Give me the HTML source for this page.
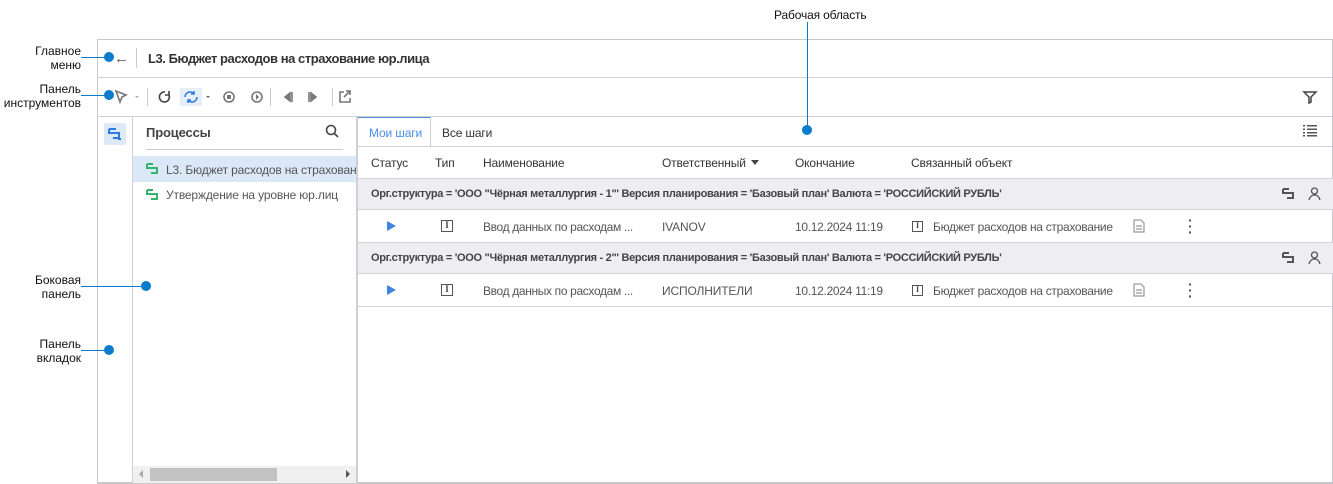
<!DOCTYPE html>
<html><head><meta charset="utf-8"><style>
*{box-sizing:border-box;margin:0;padding:0}
body{width:1333px;height:484px;background:#fff;font-family:"Liberation Sans",Arial,sans-serif;position:relative;overflow:hidden;color:#333}
.a{position:absolute}
.t{font-size:12px;white-space:nowrap;letter-spacing:-0.15px}
.lbl{font-size:12px;color:#111;text-align:right;line-height:14px}
.dot{width:10px;height:10px;border-radius:50%;background:#0a7ccc}
.ln{height:1px;background:#0a7ccc}
.g{color:#555}
.grp{font-size:11px;font-weight:bold;color:#444;letter-spacing:-0.3px}
</style></head><body>
<!-- frame -->
<div class="a" style="left:97px;top:39px;width:1236px;height:445px;border:1px solid #c8c8cc;border-bottom:2px solid #c8c8cc"></div>
<div class="a" style="left:97px;top:77px;width:1236px;height:1px;background:#d0d0d4"></div>
<div class="a" style="left:97px;top:116px;width:1236px;height:1px;background:#d0d0d4"></div>
<div class="a" style="left:132px;top:117px;width:1px;height:366px;background:#d0d0d4"></div>
<div class="a" style="left:356px;top:117px;width:2px;height:366px;background:#d0d0d4"></div>
<!-- header -->
<div class="a t" style="left:114px;top:50px;font-size:15px;color:#555">&#8592;</div>
<div class="a" style="left:136px;top:48px;width:1px;height:20px;background:#ccc"></div>
<div class="a t" style="left:148px;top:51px;font-size:13px;font-weight:bold;color:#333;letter-spacing:-0.45px">L3. Бюджет расходов на страхование юр.лица</div>
<!-- toolbar -->
<svg class="a" style="left:112px;top:88px" width="240" height="18" viewBox="0 0 240 18" fill="none" stroke="#777" stroke-width="1.6">
<path d="M4 3l10 4-4 2-2 5z" fill="none"/>
<path d="M23 8l2 2 2-2" fill="#aaa" stroke="none"/>
<path d="M53 4a5 5 0 1 0 4 3M57 3v4h-4" stroke="#444"/>
<rect x="68" y="0" width="22" height="18" fill="#e6eefa" stroke="none"/>
<path d="M73 9a5 5 0 0 1 9-3M85 9a5 5 0 0 1-9 3M82 3v3h-3M76 15v-3h3" stroke="#2d7be0"/>
<path d="M94 8l2 2 2-2" fill="#666" stroke="none"/>
<circle cx="117" cy="9" r="5"/><rect x="115" y="7" width="4" height="4" fill="#777" stroke="none"/>
<circle cx="145" cy="9" r="5"/><path d="M144 6l3 3-3 3z" fill="#777" stroke="none"/>
<path d="M180 4v10M178 5l-5 4 5 4z" fill="#777"/>
<path d="M197 4v10M199 5l5 4-5 4z" fill="#777"/>
<path d="M232 4h-4v10h10v-4M234 3h4v4M238 3l-6 6"/>
</svg>
<div class="a" style="left:147px;top:88px;width:1px;height:18px;background:#ccc"></div>
<div class="a" style="left:270px;top:88px;width:1px;height:18px;background:#ccc"></div>
<div class="a" style="left:332px;top:88px;width:1px;height:18px;background:#ccc"></div>
<svg class="a" style="left:1302px;top:89px" width="16" height="16" fill="none" stroke="#444" stroke-width="1.5"><path d="M2 3h12l-5 5v5l-2 1v-6z"/></svg>
<!-- left rail -->
<div class="a" style="left:104px;top:123px;width:22px;height:22px;background:#dde8f8;border-radius:2px"></div>
<svg class="a" style="left:108px;top:127px" width="14" height="14" fill="none" stroke="#2d7be0" stroke-width="2"><path d="M1 2h7M1 2v4h10v5H5M10 12h3"/></svg>
<!-- side panel -->
<div class="a t" style="left:146px;top:125px;font-size:13px;font-weight:bold;color:#444">Процессы</div>
<svg class="a" style="left:325px;top:124px" width="14" height="14" fill="none" stroke="#444" stroke-width="1.6"><circle cx="6" cy="6" r="4.5"/><path d="M9.5 9.5l3.5 3.5"/></svg>
<div class="a" style="left:146px;top:149px;width:197px;height:1px;background:#ccc"></div>
<div class="a" style="left:133px;top:156px;width:223px;height:26px;background:#dbe8f8"></div>
<svg class="a" style="left:146px;top:162px" width="13" height="13" fill="none" stroke="#33b36b" stroke-width="2"><path d="M1 2h6M1 2v4h10v5H5M9 11h3"/></svg>
<div class="a t g" style="left:166px;top:163px;width:190px;overflow:hidden">L3. Бюджет расходов на страхование юр.лица</div>
<svg class="a" style="left:146px;top:188px" width="13" height="13" fill="none" stroke="#33b36b" stroke-width="2"><path d="M1 2h6M1 2v4h10v5H5M9 11h3"/></svg>
<div class="a t g" style="left:166px;top:188px">Утверждение на уровне юр.лиц</div>
<div class="a" style="left:133px;top:466px;width:223px;height:17px;background:#f0f0f0"></div>
<div class="a" style="left:150px;top:468px;width:127px;height:13px;background:#c2c2c2"></div>
<div class="a" style="left:139px;top:470px;border:4px solid transparent;border-right:4px solid #aaa;border-left:0"></div>
<div class="a" style="left:346px;top:470px;border:4px solid transparent;border-left:4px solid #555;border-right:0"></div>
<!-- workspace tabs -->
<div class="a" style="left:358px;top:117px;width:73px;height:30px;border-top:1px solid #4a90e2;border-right:1px solid #d0d0d4"></div>
<div class="a t" style="left:369px;top:126px;color:#4a8ee6">Мои шаги</div>
<div class="a t" style="left:442px;top:126px;color:#333">Все шаги</div>
<svg class="a" style="left:1303px;top:124px" width="14" height="13" fill="#555"><rect x="0" y="1" width="2" height="1.5"/><rect x="4" y="1" width="10" height="1.5"/><rect x="0" y="4.5" width="2" height="1.5"/><rect x="4" y="4.5" width="10" height="1.5"/><rect x="0" y="8" width="2" height="1.5"/><rect x="4" y="8" width="10" height="1.5"/><rect x="0" y="11" width="2" height="1.5"/><rect x="4" y="11" width="10" height="1.5"/></svg>
<div class="a" style="left:358px;top:146px;width:975px;height:1px;background:#d0d0d4"></div>
<!-- header row -->
<div class="a t" style="left:371px;top:156px">Статус</div>
<div class="a t" style="left:435px;top:156px">Тип</div>
<div class="a t" style="left:483px;top:156px">Наименование</div>
<div class="a t" style="left:662px;top:156px">Ответственный</div>
<div class="a" style="left:751px;top:160px;border:4px solid transparent;border-top:5px solid #444;border-bottom:0"></div>
<div class="a t" style="left:795px;top:156px">Окончание</div>
<div class="a t" style="left:911px;top:156px">Связанный объект</div>
<!-- groups & rows -->
<div class="a" style="left:358px;top:178px;width:975px;height:32px;background:#eeeef1;border-top:1px solid #d4d4d8;border-bottom:1px solid #d4d4d8"></div>
<div class="a" style="left:358px;top:242px;width:975px;height:32px;background:#eeeef1;border-top:1px solid #d4d4d8;border-bottom:1px solid #d4d4d8"></div>
<div class="a" style="left:358px;top:306px;width:975px;height:1px;background:#d4d4d8"></div>
<div class="a t grp" style="left:371px;top:188px">Орг.структура = 'ООО "Чёрная металлургия - 1"' Версия планирования = 'Базовый план' Валюта = 'РОССИЙСКИЙ РУБЛЬ'</div>
<div class="a t grp" style="left:371px;top:252px">Орг.структура = 'ООО "Чёрная металлургия - 2"' Версия планирования = 'Базовый план' Валюта = 'РОССИЙСКИЙ РУБЛЬ'</div>
<svg class="a" style="left:1282px;top:187px" width="14" height="14" fill="none" stroke="#555" stroke-width="2"><path d="M1 2h6M1 2v4h10v5H5M9 11h3"/></svg>
<svg class="a" style="left:1308px;top:187px" width="13" height="14" fill="none" stroke="#555" stroke-width="1.3"><circle cx="6.5" cy="4" r="3"/><path d="M1 13c1-4 3-5 5.5-5s4.5 1 5.5 5"/></svg>
<svg class="a" style="left:1282px;top:251px" width="14" height="14" fill="none" stroke="#555" stroke-width="2"><path d="M1 2h6M1 2v4h10v5H5M9 11h3"/></svg>
<svg class="a" style="left:1308px;top:251px" width="13" height="14" fill="none" stroke="#555" stroke-width="1.3"><circle cx="6.5" cy="4" r="3"/><path d="M1 13c1-4 3-5 5.5-5s4.5 1 5.5 5"/></svg>

<div class="a" style="left:387px;top:221px;border:5px solid transparent;border-left:9px solid #3d86e0;border-right:0"></div>
<div class="a" style="left:441px;top:220px;width:12px;height:12px;border:1.5px solid #555;font:bold 9px 'Liberation Serif',serif;text-align:center;line-height:9px;color:#444">I</div>
<div class="a t g" style="left:483px;top:220px;letter-spacing:-0.35px">Ввод данных по расходам ...</div>
<div class="a t g" style="left:662px;top:220px">IVANOV</div>
<div class="a t g" style="left:795px;top:220px;letter-spacing:-0.3px">10.12.2024 11:19</div>
<div class="a" style="left:912px;top:221px;width:11px;height:11px;border:1.5px solid #555;font:bold 8px 'Liberation Serif',serif;text-align:center;line-height:8px;color:#444">I</div>
<div class="a t g" style="left:933px;top:220px;letter-spacing:-0.3px">Бюджет расходов на страхование</div>
<svg class="a" style="left:1133px;top:219px" width="12" height="14" fill="none" stroke="#999" stroke-width="1.2"><path d="M1 1h7l3 3v9H1z M3 7h6M3 10h6"/></svg>
<div class="a t" style="left:1188px;top:217px;font-size:14px;font-weight:bold;color:#555;line-height:6px">·<br>·<br>·</div>

<div class="a" style="left:387px;top:285px;border:5px solid transparent;border-left:9px solid #3d86e0;border-right:0"></div>
<div class="a" style="left:441px;top:284px;width:12px;height:12px;border:1.5px solid #555;font:bold 9px 'Liberation Serif',serif;text-align:center;line-height:9px;color:#444">I</div>
<div class="a t g" style="left:483px;top:284px;letter-spacing:-0.35px">Ввод данных по расходам ...</div>
<div class="a t g" style="left:662px;top:284px">ИСПОЛНИТЕЛИ</div>
<div class="a t g" style="left:795px;top:284px;letter-spacing:-0.3px">10.12.2024 11:19</div>
<div class="a" style="left:912px;top:285px;width:11px;height:11px;border:1.5px solid #555;font:bold 8px 'Liberation Serif',serif;text-align:center;line-height:8px;color:#444">I</div>
<div class="a t g" style="left:933px;top:284px;letter-spacing:-0.3px">Бюджет расходов на страхование</div>
<svg class="a" style="left:1133px;top:283px" width="12" height="14" fill="none" stroke="#999" stroke-width="1.2"><path d="M1 1h7l3 3v9H1z M3 7h6M3 10h6"/></svg>
<div class="a t" style="left:1188px;top:281px;font-size:14px;font-weight:bold;color:#555;line-height:6px">·<br>·<br>·</div>

<!-- annotations -->
<div class="a lbl" style="left:20px;top:44px;width:61px">Главное<br>меню</div>
<div class="a ln" style="left:81px;top:57px;width:28px"></div><div class="a dot" style="left:104px;top:52px"></div>
<div class="a lbl" style="left:0px;top:82px;width:81px">Панель<br>инструментов</div>
<div class="a ln" style="left:81px;top:95px;width:28px"></div><div class="a dot" style="left:104px;top:90px"></div>
<div class="a lbl" style="left:20px;top:273px;width:61px">Боковая<br>панель</div>
<div class="a ln" style="left:81px;top:286px;width:65px"></div><div class="a dot" style="left:141px;top:281px"></div>
<div class="a lbl" style="left:20px;top:337px;width:61px">Панель<br>вкладок</div>
<div class="a ln" style="left:81px;top:350px;width:28px"></div><div class="a dot" style="left:104px;top:345px"></div>
<div class="a t" style="left:774px;top:8px;color:#111">Рабочая область</div>
<div class="a" style="left:807px;top:22px;width:1px;height:108px;background:#0a7ccc"></div>
<div class="a dot" style="left:802px;top:125px"></div>
</body></html>
